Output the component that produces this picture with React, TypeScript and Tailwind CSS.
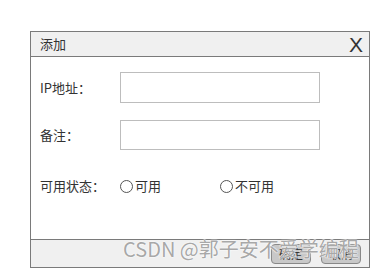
import React from 'react';

const font = { fontFamily: '"Noto Sans CJK SC", "Noto Sans", sans-serif' };

const Radio: React.FC<{ label: string }> = ({ label }) => (
  <label className="flex items-center w-[100px] text-[13px] text-[#333]">
    <span className="w-[13px] h-[13px] rounded-full border border-[#555] bg-white mr-[2px] mt-[2px]" />
    {label}
  </label>
);

export default function App() {
  return (
    <div className="w-[370px] h-[269px] bg-white pl-[30px] pt-[31px] relative" style={font}>
      <div className="w-[340px] h-[237px] border border-[#7a7a7a] flex flex-col">
        {/* Header */}
        <div className="h-[25px] bg-[#f0f0f0] border-b border-[#7a7a7a] flex items-center justify-between pl-[9px] pr-[6px]">
          <span className="text-[13px] text-[#333]">添加</span>
          <span className="text-[21px] leading-none text-[#333]" style={{ fontFamily: '"Liberation Sans", sans-serif' }}>X</span>
        </div>

        {/* Body */}
        <div className="flex-1 pl-[9px] pt-[15px]">
          <div className="flex items-center h-[31px]">
            <span className="w-[80px] text-[13px] text-[#333]">IP地址：</span>
            <input className="w-[200px] h-[31px] border border-[#bdbdbd] bg-white outline-none" />
          </div>
          <div className="flex items-center h-[30px] mt-[17px]">
            <span className="w-[80px] text-[13px] text-[#333]">备注：</span>
            <input className="w-[200px] h-[30px] border border-[#bdbdbd] bg-white outline-none" />
          </div>
          <div className="flex items-center mt-[26px]">
            <span className="w-[80px] text-[13px] text-[#333]">可用状态：</span>
            <Radio label="可用" />
            <Radio label="不可用" />
          </div>
        </div>

        {/* Footer */}
        <div className="h-[28px] bg-[#f0f0f0] border-t border-[#7a7a7a] flex items-center justify-end gap-[10px] pr-[8px]">
          <button className="w-[40px] h-[20px] bg-[#c8c8c8] border border-[#888] rounded-[4px] text-[12px] text-[#333]">确定</button>
          <button className="w-[40px] h-[20px] bg-[#c8c8c8] border border-[#888] rounded-[4px] text-[12px] text-[#333]">取消</button>
        </div>
      </div>

      {/* watermark */}
      <div
        className="absolute left-[123px] top-[236px] text-[20px] leading-[26px] text-[#a8a8a8] whitespace-nowrap pointer-events-none"
        style={{ textShadow: '0 0 1px #fff, 0 0 1px #fff, 0 0 2px #fff' }}
      >
        CSDN @郭子安不爱学编程
      </div>
    </div>
  );
}
